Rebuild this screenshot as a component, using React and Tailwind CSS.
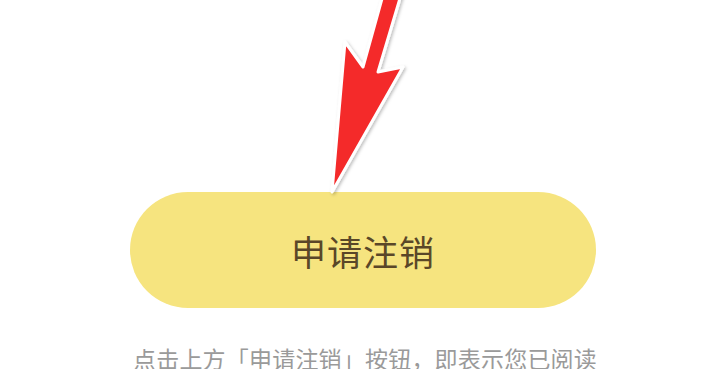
import React from "react";

export default function App() {
  return (
    <div
      className="relative w-[720px] h-[369px] overflow-hidden bg-white flex flex-col"
      style={{ fontFamily: '"Noto Sans CJK SC", "Noto Sans", sans-serif' }}
    >
      <div className="h-[192px] shrink-0" />
      <div className="ml-[130px] w-[466px] h-[116px] shrink-0 rounded-full bg-[#f6e47f] flex items-center justify-center">
        <span className="text-[35px] leading-none text-[#5a4728] tracking-[1px]">申请注销</span>
      </div>
      <div className="mt-[39px] ml-[133px] text-[23px] leading-none whitespace-nowrap tracking-[0.2px] text-[#9a9a9a]">
        点击上方「申请注销」按钮，即表示您已阅读
      </div>
      <svg
        className="absolute left-0 top-0 pointer-events-none"
        width="720"
        height="369"
        viewBox="0 0 720 369"
      >
        <defs>
          <filter id="sh" x="-20%" y="-20%" width="140%" height="140%">
            <feDropShadow dx="1.5" dy="1.5" stdDeviation="1.5" floodColor="#000" floodOpacity="0.25" />
          </filter>
        </defs>
        <polygon
          points="383,-5 401,-5 378,72 403,67 332,192 345,42 363,67"
          fill="#f42a2b"
          stroke="#fff"
          strokeWidth="3"
          strokeLinejoin="round"
          filter="url(#sh)"
        />
      </svg>
    </div>
  );
}
